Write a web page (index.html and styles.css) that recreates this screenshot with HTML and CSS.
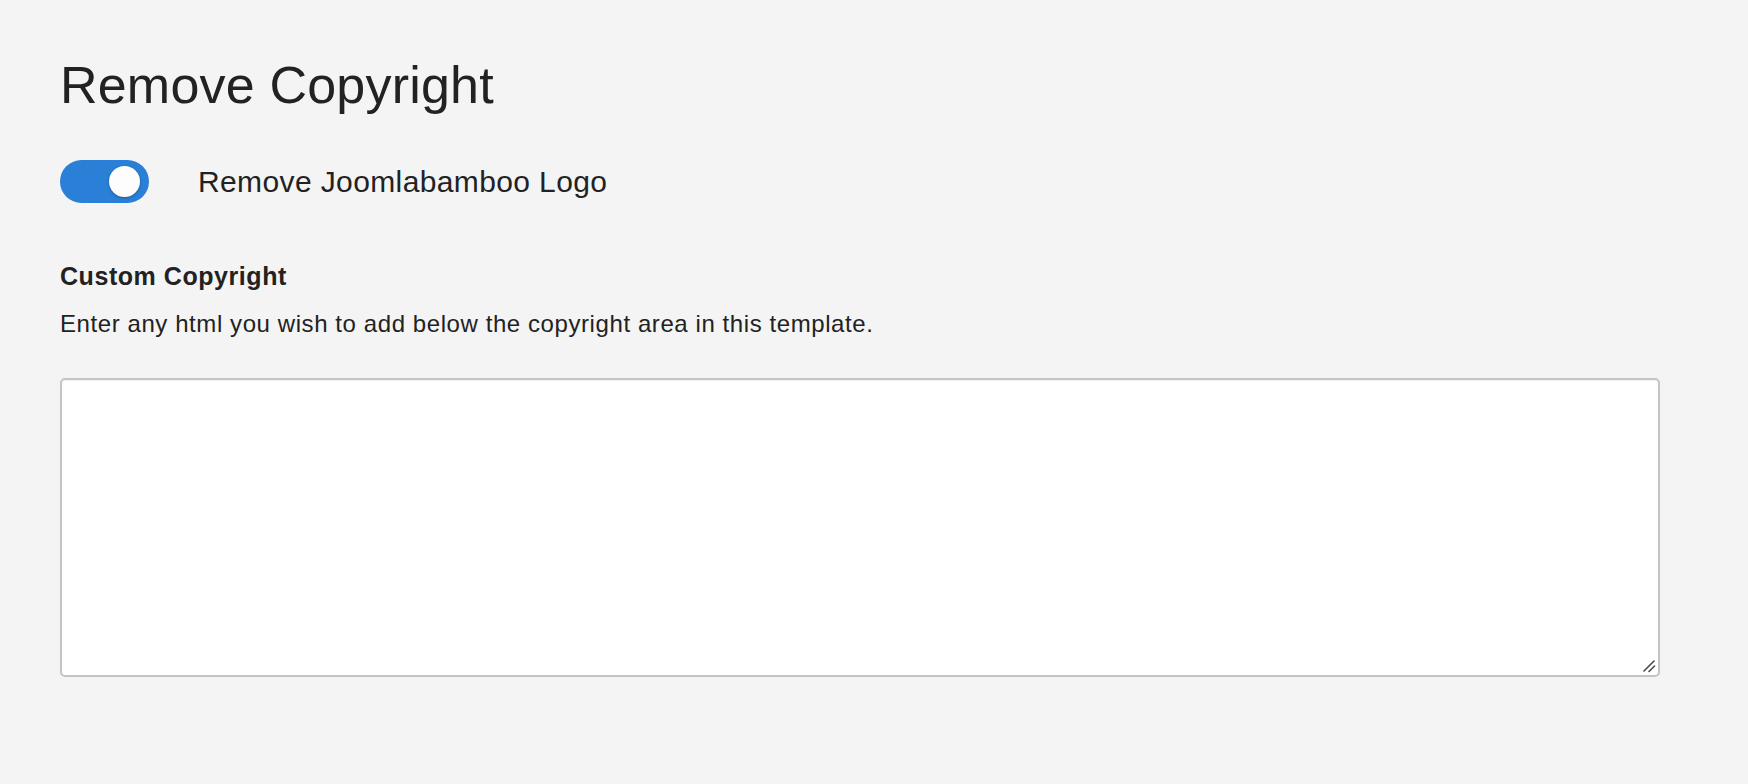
FILE: index.html
```html
<!DOCTYPE html>
<html>
<head>
<meta charset="utf-8">
<title>Remove Copyright</title>
<link rel="stylesheet" href="styles.css">
</head>
<body>
<main class="panel">
  <h1 class="title">Remove Copyright</h1>
  <div class="toggle-row">
    <span class="switch"><span class="knob"></span></span>
    <span class="toggle-label">Remove Joomlabamboo Logo</span>
  </div>
  <h2 class="field-title">Custom Copyright</h2>
  <p class="field-desc">Enter any html you wish to add below the copyright area in this template.</p>
  <div class="input-wrap">
    <textarea class="field-input"></textarea>
    <svg class="grip" width="14" height="14" viewBox="0 0 14 14" aria-hidden="true">
      <line x1="2" y1="12" x2="12" y2="2" stroke="#4a4a4a" stroke-width="1.6" stroke-linecap="round"/>
      <line x1="7" y1="12.5" x2="12.5" y2="7" stroke="#4a4a4a" stroke-width="1.6" stroke-linecap="round"/>
    </svg>
  </div>
</main>
</body>
</html>
```
FILE: styles.css
```css
html, body {
  margin: 0;
  padding: 0;
  background: #f4f4f4;
}
body {
  font-family: "Liberation Sans", Arial, sans-serif;
  color: #222222;
}
.panel {
  display: flex;
  flex-direction: column;
  align-items: flex-start;
  padding: 55px 88px 0 60px;
}
.title {
  margin: 0;
  font-size: 52px;
  line-height: 60px;
  font-weight: 400;
  letter-spacing: 0.2px;
}
.toggle-row {
  margin-top: 45px;
  display: flex;
  align-items: center;
  gap: 49px;
}
.switch {
  width: 89px;
  height: 43px;
  border-radius: 22px;
  background: #2a80d6;
  display: flex;
  align-items: center;
  justify-content: flex-end;
  padding-right: 9px;
  box-sizing: border-box;
}
.knob {
  width: 31px;
  height: 31px;
  border-radius: 50%;
  background: #fdfdfd;
  box-shadow: 0 1px 3px rgba(0,0,0,0.3);
}
.toggle-label {
  font-size: 30px;
  line-height: 43px;
  letter-spacing: 0.38px;
}
.field-title {
  margin: 58px 0 0 0;
  font-size: 25px;
  line-height: 30px;
  font-weight: 700;
  letter-spacing: 0.55px;
}
.field-desc {
  margin: 18px 0 0 0;
  font-size: 24px;
  line-height: 30px;
  letter-spacing: 0.58px;
}
.input-wrap {
  margin-top: 39px;
  position: relative;
  display: flex;
}
.field-input {
  width: 1600px;
  height: 299px;
  box-sizing: border-box;
  border: 2px solid #c4c4c4;
  border-radius: 5px;
  background: #ffffff;
  box-shadow: inset 0 1px 2px rgba(0,0,0,0.06);
  resize: none;
  font-family: "Liberation Sans", Arial, sans-serif;
  font-size: 20px;
  padding: 8px;
  outline: none;
}
.grip {
  position: absolute;
  right: 4px;
  bottom: 4px;
}
```
